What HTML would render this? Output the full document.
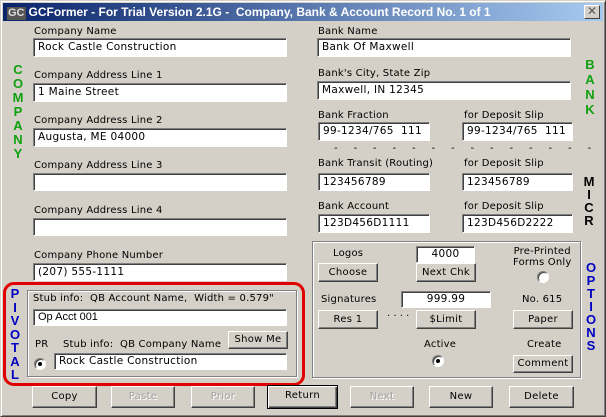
<!DOCTYPE html>
<html><head><meta charset="utf-8"><style>
*{box-sizing:border-box;margin:0;padding:0}
body{width:606px;height:417px;background:#d4d0c8;font-family:"DejaVu Sans","Liberation Sans",sans-serif;font-size:10px;color:#000;position:relative;overflow:hidden}
.win{position:absolute;left:0;top:0;width:606px;height:417px;border:1px solid;border-color:#d4d0c8 #404040 #404040 #d4d0c8;box-shadow:inset 1px 1px 0 #fff,inset -1px -1px 0 #808080}
.title{position:absolute;left:3px;top:3px;width:600px;height:18px;background:linear-gradient(90deg,#0a246a,#a6caf0);color:#fff;font-family:"Liberation Sans",sans-serif;font-weight:bold;font-size:12px;line-height:18px;padding-left:4px;white-space:nowrap}
.gc{display:inline-block;background:#555;color:#ddd;font-size:11px;padding:0 1px;line-height:13px;margin-right:3px}
.x{position:absolute;left:584px;top:5px;width:16px;height:14px;background:#d4d0c8;border:1px solid;border-color:#fff #404040 #404040 #fff;color:#555;font-size:12px;line-height:11px;text-align:center;font-family:"Liberation Sans",sans-serif}
.a{position:absolute;white-space:nowrap}
.l{position:absolute;white-space:nowrap;font-size:10px;letter-spacing:0.2px}
.in{position:absolute;background:#fff;border:1px solid;border-color:#808080 #fff #fff #808080;box-shadow:inset 1px 1px 0 #404040;padding-left:4px;font-size:10.5px;line-height:16px;white-space:nowrap;letter-spacing:0.3px}
.btn{position:absolute;background:#d4d0c8;border:1px solid;border-color:#fff #404040 #404040 #fff;box-shadow:inset -1px -1px 0 #808080;text-align:center;font-size:10px;letter-spacing:0.3px}
.dis{color:#a0a0a0;text-shadow:1px 1px 0 #fff}
.v{position:absolute;font-family:"Liberation Sans",sans-serif;font-weight:bold;font-size:13px;text-align:center;width:14px}
.grp{position:absolute;border:1px solid #808080;box-shadow:1px 1px 0 #fff,inset 1px 1px 0 #fff}
.radio{position:absolute;width:12px;height:12px;border-radius:50%;background:#fff;border:1px solid;border-color:#808080 #fff #fff #808080;box-shadow:inset 1px 1px 0 #404040}
.dot{position:absolute;left:3px;top:3px;width:4px;height:4px;border-radius:50%;background:#000}
</style></head><body>
<div class="win"></div>
<div class="title"><span class="gc">GC</span>GCFormer - For Trial Version 2.1G -&nbsp; Company, Bank &amp; Account Record No. 1 of 1</div>
<div class="x">✕</div>

<div class="l" style="left:34px;top:26px">Company Name</div>
<div class="in" style="left:33px;top:38px;width:254px;height:19px">Rock Castle Construction</div>
<div class="l" style="left:34px;top:70px">Company Address Line 1</div>
<div class="in" style="left:33px;top:83px;width:254px;height:19px">1 Maine Street</div>
<div class="l" style="left:34px;top:115px">Company Address Line 2</div>
<div class="in" style="left:33px;top:128px;width:254px;height:19px">Augusta, ME 04000</div>
<div class="l" style="left:34px;top:160px">Company Address Line 3</div>
<div class="in" style="left:33px;top:173px;width:254px;height:18px"></div>
<div class="l" style="left:34px;top:205px">Company Address Line 4</div>
<div class="in" style="left:33px;top:218px;width:254px;height:18px"></div>
<div class="l" style="left:34px;top:250px">Company Phone Number</div>
<div class="in" style="left:33px;top:263px;width:254px;height:18px">(207) 555-1111</div>

<div class="l" style="left:318px;top:26px">Bank Name</div>
<div class="in" style="left:317px;top:38px;width:254px;height:19px">Bank Of Maxwell</div>
<div class="l" style="left:318px;top:68px">Bank's City, State Zip</div>
<div class="in" style="left:317px;top:81px;width:254px;height:19px">Maxwell, IN 12345</div>
<div class="l" style="left:318px;top:110px">Bank Fraction</div>
<div class="in" style="left:318px;top:122px;width:112px;height:19px">99-1234/765&nbsp; 111</div>
<div class="l" style="left:464px;top:110px">for Deposit Slip</div>
<div class="in" style="left:462px;top:122px;width:111px;height:19px">99-1234/765&nbsp; 111</div>
<div class="a" style="left:334px;top:143px;letter-spacing:0">-&nbsp;&nbsp;&nbsp;&nbsp;&nbsp;-&nbsp;&nbsp;&nbsp;&nbsp;&nbsp;-&nbsp;&nbsp;&nbsp;&nbsp;&nbsp;-&nbsp;&nbsp;&nbsp;&nbsp;&nbsp;-&nbsp;&nbsp;&nbsp;&nbsp;&nbsp;-&nbsp;&nbsp;&nbsp;&nbsp;&nbsp;-&nbsp;&nbsp;&nbsp;&nbsp;&nbsp;-&nbsp;&nbsp;&nbsp;&nbsp;&nbsp;-&nbsp;&nbsp;&nbsp;&nbsp;&nbsp;-&nbsp;&nbsp;&nbsp;&nbsp;&nbsp;-&nbsp;&nbsp;&nbsp;&nbsp;&nbsp;-&nbsp;&nbsp;&nbsp;&nbsp;&nbsp;-&nbsp;&nbsp;&nbsp;&nbsp;&nbsp;-</div>
<div class="l" style="left:318px;top:158px">Bank Transit (Routing)</div>
<div class="in" style="left:318px;top:173px;width:112px;height:18px">123456789</div>
<div class="l" style="left:464px;top:158px">for Deposit Slip</div>
<div class="in" style="left:462px;top:173px;width:111px;height:18px">123456789</div>
<div class="l" style="left:318px;top:201px">Bank Account</div>
<div class="in" style="left:318px;top:214px;width:112px;height:19px">123D456D1111</div>
<div class="l" style="left:464px;top:201px">for Deposit Slip</div>
<div class="in" style="left:462px;top:214px;width:111px;height:19px">123D456D2222</div>

<div class="v" style="left:11px;top:63px;color:#10a010;line-height:14px">C<br>O<br>M<br>P<br>A<br>N<br>Y</div>
<div class="v" style="left:583px;top:57px;color:#10a010;line-height:15px">B<br>A<br>N<br>K</div>
<div class="v" style="left:582px;top:175px;color:#000;line-height:13px">M<br>I<br>C<br>R</div>
<div class="v" style="left:584px;top:261px;color:#0000c0;line-height:13px">O<br>P<br>T<br>I<br>O<br>N<br>S</div>
<div class="v" style="left:8px;top:287px;color:#0000c0;line-height:13.5px">P<br>I<br>V<br>O<br>T<br>A<br>L</div>

<div class="grp" style="left:312px;top:241px;width:269px;height:137px"></div>
<div class="l" style="left:333px;top:248px">Logos</div>
<div class="btn" style="left:318px;top:263px;width:60px;height:19px;line-height:17px">Choose</div>
<div class="in" style="left:416px;top:246px;width:59px;height:17px;text-align:center;padding:0;line-height:15px">4000</div>
<div class="btn" style="left:416px;top:263px;width:60px;height:19px;line-height:17px">Next Chk</div>
<div class="l" style="left:513px;top:246px;text-align:center;line-height:11px">Pre-Printed<br>Forms Only</div>
<div class="radio" style="left:537px;top:271px"></div>
<div class="l" style="left:321px;top:294px">Signatures</div>
<div class="in" style="left:401px;top:291px;width:90px;height:17px;text-align:center;padding:0;line-height:15px">999.99</div>
<div class="l" style="left:522px;top:294px">No. 615</div>
<div class="btn" style="left:318px;top:310px;width:60px;height:19px;line-height:17px">Res 1</div>
<div class="a" style="left:387px;top:311px">· · · ·</div>
<div class="btn" style="left:416px;top:310px;width:60px;height:19px;line-height:17px">$Limit</div>
<div class="btn" style="left:513px;top:310px;width:60px;height:19px;line-height:17px">Paper</div>
<div class="l" style="left:424px;top:339px">Active</div>
<div class="radio" style="left:432px;top:355px"><div class="dot"></div></div>
<div class="l" style="left:527px;top:339px">Create</div>
<div class="btn" style="left:513px;top:355px;width:60px;height:18px;line-height:16px">Comment</div>

<div style="position:absolute;left:3px;top:282px;width:302px;height:104px;border:3px solid #e00000;border-radius:11px"></div>
<div class="grp" style="left:27px;top:290px;width:270px;height:87px"></div>
<div class="l" style="left:33px;top:293px">Stub info:&nbsp; QB Account Name,&nbsp; Width = 0.579"</div>
<div class="in" style="left:33px;top:309px;width:254px;height:17px;font-family:'Liberation Sans',sans-serif;font-size:11px;line-height:15px;letter-spacing:0">Op Acct 001</div>
<div class="l" style="left:35px;top:339px">PR</div>
<div class="l" style="left:63px;top:339px">Stub info:&nbsp; QB Company Name</div>
<div class="btn" style="left:228px;top:331px;width:60px;height:18px;line-height:16px">Show Me</div>
<div class="radio" style="left:34px;top:358px"><div class="dot"></div></div>
<div class="in" style="left:54px;top:353px;width:233px;height:17px;line-height:15px">Rock Castle Construction</div>

<div class="btn" style="left:32px;top:386px;width:65px;height:22px;line-height:20px">Copy</div>
<div class="btn dis" style="left:111px;top:386px;width:64px;height:22px;line-height:20px">Paste</div>
<div class="btn dis" style="left:191px;top:386px;width:64px;height:22px;line-height:20px">Prior</div>
<div class="btn" style="left:267px;top:385px;width:71px;height:24px;line-height:20px;border:1px solid #000;box-shadow:inset 1px 1px 0 #fff,inset -1px -1px 0 #404040,inset -2px -2px 0 #808080">Return</div>
<div class="btn dis" style="left:350px;top:386px;width:64px;height:22px;line-height:20px">Next</div>
<div class="btn" style="left:429px;top:386px;width:64px;height:22px;line-height:20px">New</div>
<div class="btn" style="left:509px;top:386px;width:65px;height:22px;line-height:20px">Delete</div>
</body></html>
